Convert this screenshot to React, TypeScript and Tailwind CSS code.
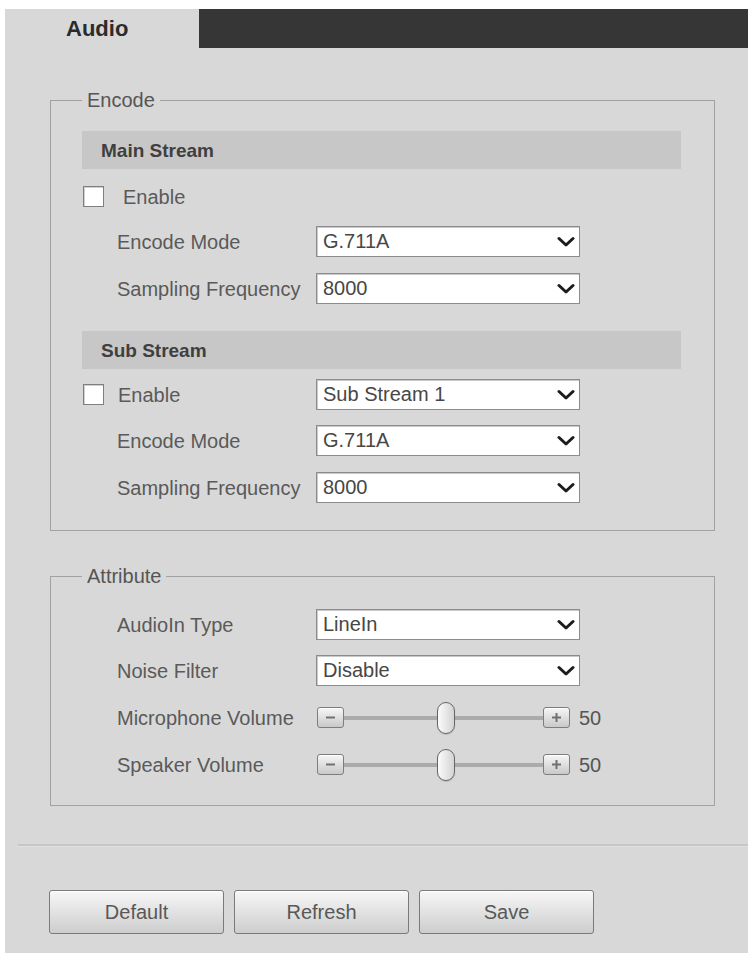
import React from "react";

function Chevron() {
  return (
    <svg width="18" height="12" viewBox="0 0 18 12">
      <path d="M2 2.5 L9 9 L16 2.5" fill="none" stroke="#1c1c1c" strokeWidth="3" strokeLinecap="round" strokeLinejoin="round" />
    </svg>
  );
}

function Select({ value }: { value: string }) {
  return (
    <div className="w-[264px] h-[31px] border border-[#8c8c8c] bg-white flex items-center justify-between pl-[6px] pr-[4px] text-[20px] text-[#474747] shadow-[inset_1px_1px_0_#c9c9c9]">
      <span className="leading-none -mt-[2px]">{value}</span>
      <Chevron />
    </div>
  );
}

function Row({ label, value, mt }: { label: string; value: string; mt: string }) {
  return (
    <div className={`flex items-center h-[31px] ${mt}`}>
      <span className="w-[234px] pl-[35px] text-[20px] text-[#5a5a5a] leading-none">{label}</span>
      <Select value={value} />
    </div>
  );
}

function Checkbox() {
  return <div className="w-[21px] h-[21px] ml-[1px] bg-white border border-[#7f7f7f] shadow-[inset_1px_1px_0_#d0d0d0]" />;
}

function SmallBtn({ plus }: { plus?: boolean }) {
  return (
    <div className="w-[27px] h-[21px] border border-[#7d7d7d] rounded-[3px] bg-gradient-to-b from-[#f6f6f6] to-[#c9c9c9] flex items-center justify-center shadow-[inset_0_1px_0_#ffffff]">
      <svg width="13" height="13" viewBox="0 0 13 13">
        <line x1="2" y1="6.5" x2="11" y2="6.5" stroke="#707070" strokeWidth="2" />
        {plus && <line x1="6.5" y1="2" x2="6.5" y2="11" stroke="#707070" strokeWidth="2" />}
      </svg>
    </div>
  );
}

function Slider({ label, value, mt }: { label: string; value: number; mt: string }) {
  const pct = value / 100;
  return (
    <div className={`flex items-center h-[31px] ${mt}`}>
      <span className="w-[234px] pl-[35px] text-[20px] text-[#5a5a5a] leading-none">{label}</span>
      <div className="flex items-center ml-[1px]">
        <SmallBtn />
        <div className="relative w-[199px] h-[4px] bg-[#ababab]">
          <div
            className="absolute top-[-14px] w-[18px] h-[32px] rounded-full border border-[#666666] bg-gradient-to-r from-[#fbfbfb] to-[#d4d4d4] shadow-[0_1px_1px_rgba(0,0,0,0.15)]"
            style={{ left: `${pct * 199 - 7}px` }}
          />
        </div>
        <SmallBtn plus />
        <span className="ml-[9px] text-[20px] text-[#555] leading-none">{value}</span>
      </div>
    </div>
  );
}

function Bar({ title, mt }: { title: string; mt: string }) {
  return (
    <div className={`w-[599px] h-[38px] bg-[#c7c7c7] flex items-center pl-[19px] pt-[3px] text-[19px] font-bold text-[#3f3f3f] ${mt}`}>
      {title}
    </div>
  );
}

function Button({ label }: { label: string }) {
  return (
    <div className="w-[175px] h-[44px] border border-[#7a7a7a] rounded-[3px] bg-gradient-to-b from-[#f7f7f7] to-[#cdcdcd] flex items-center justify-center text-[20px] text-[#585858] shadow-[inset_0_1px_0_#ffffff]">
      {label}
    </div>
  );
}

export default function App() {
  return (
    <div className="w-[748px] h-[957px] bg-white pt-[9px] pl-[5px] pb-[4px] font-['Liberation_Sans',Arial,sans-serif]">
      <div className="h-full bg-[#d8d8d8] flex flex-col">
        <div className="h-[39px] flex">
          <div className="w-[194px] pl-[61px] flex items-center text-[22px] font-bold text-[#2b2b2b]">Audio</div>
          <div className="flex-1 bg-[#363636]" />
        </div>

        <fieldset className="mt-[41px] ml-[45px] w-[665px] border border-[#a2a2a2] px-[31px] pb-[27px]">
          <legend className="px-[5px] text-[20px] leading-[23px] text-[#555]">Encode</legend>
          <Bar title="Main Stream" mt="mt-[19px]" />
          <div className="flex items-center h-[31px] mt-[12px]">
            <Checkbox />
            <span className="ml-[19px] text-[20px] text-[#5a5a5a] leading-none">Enable</span>
          </div>
          <Row label="Encode Mode" value="G.711A" mt="mt-[14px]" />
          <Row label="Sampling Frequency" value="8000" mt="mt-[16px]" />

          <Bar title="Sub Stream" mt="mt-[27px]" />
          <div className="flex items-center h-[31px] mt-[10px]">
            <div className="w-[234px] flex items-center">
              <Checkbox />
              <span className="ml-[14px] text-[20px] text-[#5a5a5a] leading-none">Enable</span>
            </div>
            <Select value="Sub Stream 1" />
          </div>
          <Row label="Encode Mode" value="G.711A" mt="mt-[15px]" />
          <Row label="Sampling Frequency" value="8000" mt="mt-[16px]" />
        </fieldset>

        <fieldset className="mt-[34px] ml-[45px] w-[665px] border border-[#a2a2a2] px-[31px] pb-[25px]">
          <legend className="px-[5px] text-[20px] leading-[23px] text-[#555]">Attribute</legend>
          <Row label="AudioIn Type" value="LineIn" mt="mt-[21px]" />
          <Row label="Noise Filter" value="Disable" mt="mt-[15px]" />
          <Slider label="Microphone Volume" value={50} mt="mt-[16px]" />
          <Slider label="Speaker Volume" value={50} mt="mt-[16px]" />
        </fieldset>

        <div className="mt-[38px] ml-[13px] h-[3px] bg-[#c6c6c6] border-b border-[#e0e0e0]" />

        <div className="mt-[43px] ml-[44px] flex gap-[10px]">
          <Button label="Default" />
          <Button label="Refresh" />
          <Button label="Save" />
        </div>
      </div>
    </div>
  );
}
